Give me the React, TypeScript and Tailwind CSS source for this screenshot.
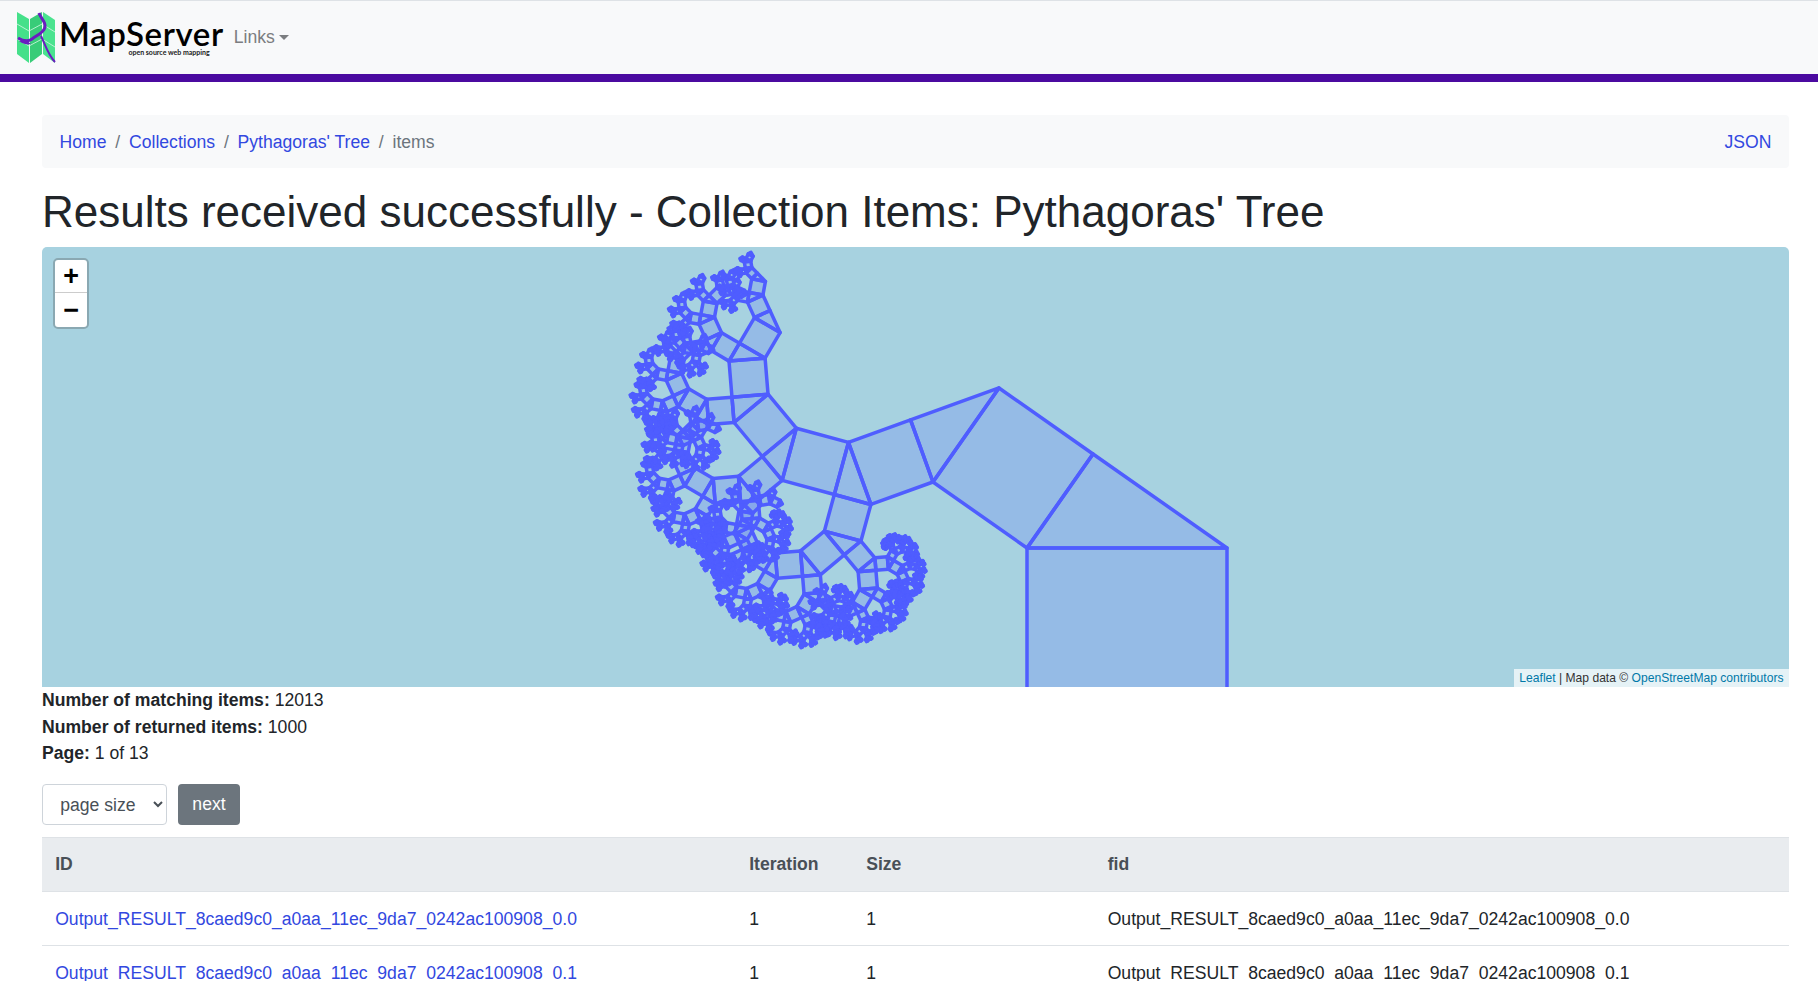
import React from "react";

type P = [number, number];
const polys: P[][] = [];
const T = 0.33;
const H = 0.4702;
const SKIP = new Set(["LLLLL", "LLLLSLL"]);

function apex(d: P, c: P): P {
  const gx = c[0] - d[0];
  const gy = c[1] - d[1];
  return [d[0] + T * gx + H * gy, d[1] + T * gy - H * gx];
}

function square(a: P, b: P): [P, P] {
  const dx = b[0] - a[0];
  const dy = b[1] - a[1];
  const d: P = [a[0] + dy, a[1] - dx];
  const c: P = [b[0] + dy, b[1] - dx];
  polys.push([a, b, c, d]);
  return [d, c];
}

function grow(a: P, b: P, depth: number, path: string) {
  if (SKIP.has(path)) return;
  const [d, c] = square(a, b);
  const e = apex(d, c);
  polys.push([d, c, e]);
  if (depth <= 0) return;
  grow(d, e, depth - 1, path + "S");
  grow(e, c, depth - 1, path + "L");
}

function build() {
  polys.length = 0;
  const [d, c] = square([985, 501], [1185, 501]);
  const e = apex(d, c);
  polys.push([d, c, e]);
  const [d2, c2] = square(d, e);
  const e2 = apex(d2, c2);
  polys.push([d2, c2, e2]);
  grow(d2, e2, 9, "");
  return polys.slice();
}

const shapes = build();

function Logo() {
  return (
    <svg width="40" height="54" viewBox="0 0 40 54" className="shrink-0">
      <polygon points="0,2 12,9 12,53 0,44" fill="#45e08a" />
      <polygon points="13,9 25,2 25,44 13,53" fill="#38cc78" />
      <polygon points="26,2 38,10 38,53 26,44" fill="#4ae38f" />
      <path d="M0 14 L12 21 L25 14 L38 22 M0 29 L12 36 L25 29 L38 37" stroke="#d6f7e4" strokeWidth="0.8" fill="none" />
      <path d="M22 3 C24 9 29 12 28 17 C27 23 20 25 15 29 C11 32 6 31 1 28" stroke="#6a1cc0" strokeWidth="3" fill="none" />
      <path d="M2 31 C6 34 10 35 14 34 L9 30 Z" fill="#6a1cc0" />
      <path d="M24 26 C28 34 31 45 38 52" stroke="#6a1cc0" strokeWidth="2" fill="none" />
    </svg>
  );
}

const link = "text-[#3248e0]";

export default function App() {
  const cell = "px-[13.2px] pt-[14.2px] pb-[12.2px]";
  const row = (id: string) => (
    <tr className="border-b border-[#dee2e6]">
      <td className={cell}><a className={link}>{id}</a></td>
      <td className={cell}>1</td>
      <td className={cell}>1</td>
      <td className={cell}>{id}</td>
    </tr>
  );
  return (
    <div className="h-[981px] overflow-hidden bg-white font-['Liberation_Sans',Arial,sans-serif] text-[17.6px] leading-[26.4px] text-[#212529]">
      <nav className="flex h-[74px] items-center gap-[10px] border-t border-[#dee2e6] bg-[#f8f9fa] pb-[2px] pl-[17px]">
        <div className="flex items-center gap-[2px]">
          <Logo />
          <div className="flex flex-col">
            <span className="font-['Lato',sans-serif] text-[33px] leading-[32px] font-semibold tracking-[0.6px] text-black">MapServer</span>
            <span className="mr-[14px] self-end font-['Lato',sans-serif] text-[7px] leading-[7px] font-bold text-[#222]">open source web mapping</span>
          </div>
        </div>
        <span className="flex items-center gap-[4px] pt-[1px] text-[#7b7d80]">
          Links
          <span className="border-x-[5px] border-t-[5px] border-x-transparent border-t-[#7b7d80]" />
        </span>
      </nav>
      <div className="h-[8px] bg-[#4b0aa0]" />
      <main className="pt-[33px] pr-[29px] pl-[42px]">
        <div className="flex h-[52.8px] items-center justify-between rounded-[4px] bg-[#f8f9fa] px-[17.6px] pt-[1px]">
          <div className="flex items-center gap-[8.8px]">
            <a className={link}>Home</a><span className="text-[#6c757d]">/</span>
            <a className={link}>Collections</a><span className="text-[#6c757d]">/</span>
            <a className={link}>Pythagoras' Tree</a><span className="text-[#6c757d]">/</span>
            <span className="text-[#6c757d]">items</span>
          </div>
          <a className={link}>JSON</a>
        </div>
        <h1 className="mt-[18.6px] mb-[7.8px] text-[44px] leading-[52.8px] font-normal">Results received successfully - Collection Items: Pythagoras' Tree</h1>
        <div className="relative h-[440px] overflow-hidden rounded-t-[5px] bg-[#a7d2e0]">
          <svg className="absolute inset-0" width="1747" height="440" viewBox="0 0 1747 440">
            {shapes.map((s, i) => (
              <polygon
                key={i}
                points={s.map((p) => p.join(",")).join(" ")}
                fill="#4f5dff"
                fillOpacity={0.2}
                stroke="#4f5dff"
                strokeWidth={3.5}
                strokeLinejoin="round"
              />
            ))}
          </svg>
          <div className="absolute top-[11px] left-[11px] flex w-[36px] flex-col rounded-[5px] border-2 border-[#8aa8b2] bg-white">
            <span className="flex h-[33.5px] items-center justify-center border-b border-[#ccc] pt-[3px] font-['Liberation_Mono',monospace] text-[27px] font-bold text-black">+</span>
            <span className="flex h-[33.5px] items-center justify-center pt-[3px] font-['Liberation_Mono',monospace] text-[27px] font-bold text-black">−</span>
          </div>
          <div className="absolute right-0 bottom-0 bg-white/70 px-[5.5px] text-[12.1px] leading-[18px] text-[#333]">
            <a className="text-[#0078a8]">Leaflet</a> | Map data © <a className="text-[#0078a8]">OpenStreetMap contributors</a>
          </div>
        </div>
        <p><b>Number of matching items:</b> 12013</p>
        <p className="pt-[1px]"><b>Number of returned items:</b> 1000</p>
        <p className="-mt-[1px]"><b>Page:</b> 1 of 13</p>
        <div className="mt-[17.6px] flex gap-[11px]">
          <select className="h-[41.6px] w-[125px] rounded-[4px] border border-[#ced4da] bg-white px-[13.2px] text-[#495057]">
            <option>page size</option>
          </select>
          <span className="flex h-[41.6px] w-[62px] items-center justify-center rounded-[4px] bg-[#6c757d] text-white">next</span>
        </div>
        <table className="mt-[11.6px] w-full table-fixed border-collapse">
          <thead>
            <tr className="border-y border-[#dee2e6] bg-[#e9ecef] text-left text-[#495057]">
              <th className="w-[694px] p-[13.2px]">ID</th>
              <th className="w-[117px] p-[13.2px]">Iteration</th>
              <th className="w-[241.5px] p-[13.2px]">Size</th>
              <th className="p-[13.2px]">fid</th>
            </tr>
          </thead>
          <tbody>
            {row("Output_RESULT_8caed9c0_a0aa_11ec_9da7_0242ac100908_0.0")}
            {row("Output_RESULT_8caed9c0_a0aa_11ec_9da7_0242ac100908_0.1")}
          </tbody>
        </table>
      </main>
    </div>
  );
}
